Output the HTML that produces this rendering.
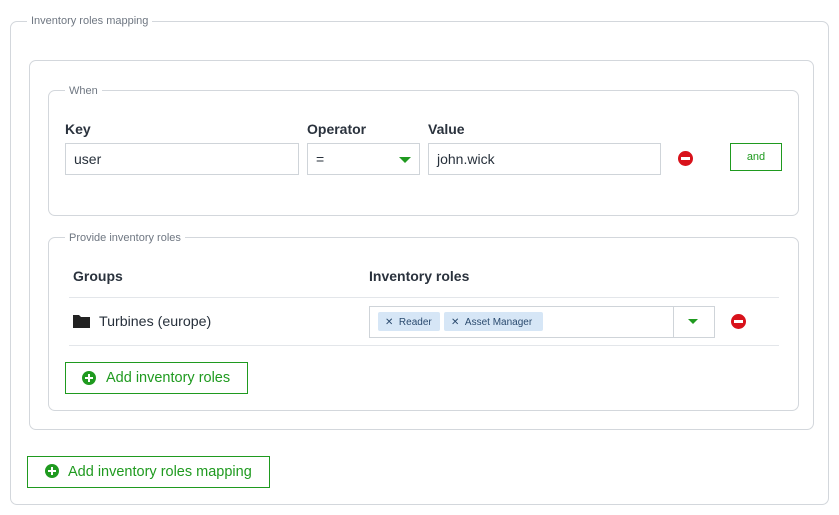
<!DOCTYPE html>
<html><head><style>
*{box-sizing:border-box;margin:0;padding:0}
body{width:839px;height:515px;background:#fff;font-family:"Liberation Sans",sans-serif;color:#27303b;position:relative;overflow:hidden}
.a{position:absolute}
.box{position:absolute;border:1px solid #d3d7dc;border-radius:7px}
.lg{position:absolute;background:#fff;padding:0 4px;font-size:11px;color:#6f7782;line-height:13px}
.lbl{position:absolute;font-size:14px;font-weight:bold;color:#2a323d}
.inp{position:absolute;border:1px solid #cfd4d9;height:32px;font-size:14px;line-height:30px;padding-left:8px}
.tri{position:absolute;width:0;height:0;border-left:6px solid transparent;border-right:6px solid transparent;border-top:6px solid #1f9a1f}
.min{position:absolute;width:15px;height:15px;border-radius:50%;background:#d8121b}
.min:after{content:"";position:absolute;left:3px;top:6px;width:9px;height:3px;background:#fff}
.plus{position:absolute;width:14px;height:14px;border-radius:50%;background:#1f9a1f}
.plus:before{content:"";position:absolute;left:3px;top:6px;width:8px;height:2px;background:#fff}
.plus:after{content:"";position:absolute;left:6px;top:3px;width:2px;height:8px;background:#fff}
.btn{position:absolute;border:1px solid #1f9a1f;color:#1f9a1f;font-size:14.5px}
.chip{position:absolute;background:#d6e6f6;border-radius:2px;height:19px;font-size:10px;line-height:19px;padding-top:1px;color:#2a4a6e;padding-left:7px}
.line{position:absolute;height:1px;background:#e3e6ea}
</style></head><body>
<div class="box" style="left:10px;top:21px;width:819px;height:484px"></div>
<div class="lg" style="left:27px;top:15px">Inventory roles mapping</div>
<div class="box" style="left:29px;top:60px;width:785px;height:370px"></div>
<div class="box" style="left:48px;top:90px;width:751px;height:126px"></div>
<div class="lg" style="left:65px;top:85px">When</div>
<div class="lbl" style="left:65px;top:121px">Key</div>
<div class="lbl" style="left:307px;top:121px">Operator</div>
<div class="lbl" style="left:428px;top:121px">Value</div>
<div class="inp" style="left:65px;top:143px;width:234px">user</div>
<div class="inp" style="left:307px;top:143px;width:113px">=</div>
<div class="tri" style="left:399px;top:157px"></div>
<div class="inp" style="left:428px;top:143px;width:233px">john.wick</div>
<div class="min" style="left:678px;top:151px"></div>
<div class="btn" style="left:730px;top:143px;width:52px;height:28px;font-size:11px;text-align:center;line-height:26px">and</div>
<div class="box" style="left:48px;top:237px;width:751px;height:174px"></div>
<div class="lg" style="left:65px;top:232px">Provide inventory roles</div>
<div class="lbl" style="left:73px;top:268px">Groups</div>
<div class="lbl" style="left:369px;top:268px">Inventory roles</div>
<div class="line" style="left:69px;top:297px;width:710px"></div>
<div class="line" style="left:69px;top:345px;width:710px"></div>
<svg class="a" style="left:73px;top:315px" width="17" height="13" viewBox="0 0 17 13"><path d="M0 0H6L8 2H17V13H0Z" fill="#222"/></svg>
<div class="a" style="left:99px;top:314px;font-size:14.2px">Turbines (europe)</div>
<div class="inp" style="left:369px;top:306px;width:346px;padding:0"></div>
<div class="a" style="left:673px;top:307px;width:1px;height:30px;background:#cfd4d9"></div>
<div class="tri" style="left:688px;top:319px;border-left-width:5px;border-right-width:5px;border-top-width:5px"></div>
<div class="chip" style="left:378px;top:312px;width:62px">✕&nbsp;&nbsp;Reader</div>
<div class="chip" style="left:444px;top:312px;width:99px">✕&nbsp;&nbsp;Asset Manager</div>
<div class="min" style="left:731px;top:314px"></div>
<div class="btn" style="left:65px;top:362px;width:183px;height:32px;line-height:30px;padding-left:40px">Add inventory roles</div>
<div class="plus" style="left:82px;top:371px"></div>
<div class="btn" style="left:27px;top:456px;width:243px;height:32px;line-height:30px;padding-left:40px">Add inventory roles mapping</div>
<div class="plus" style="left:45px;top:464px"></div>
</body></html>
